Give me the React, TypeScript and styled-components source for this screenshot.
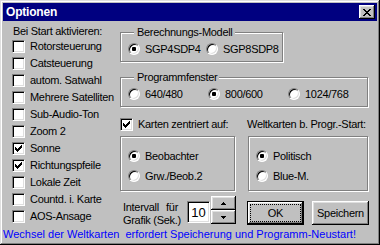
import styled, { createGlobalStyle } from "styled-components";

const GlobalStyle = createGlobalStyle`
  html, body {
    margin: 0;
    padding: 0;
    background: #c0c0c0;
  }
`;

const Window = styled.div`
  width: 380px;
  height: 245px;
  box-sizing: border-box;
  padding: 3px;
  background: #c0c0c0;
  box-shadow: inset -1px -1px #000, inset 1px 1px #dfdfdf, inset -2px -2px #808080,
    inset 2px 2px #fff;
  display: flex;
  flex-direction: column;
  color: #000;
  font-family: "Liberation Sans", Arial, sans-serif;
  font-size: 11px;
  line-height: 13px;
  letter-spacing: -0.3px;
`;

const TitleBar = styled.div`
  height: 18px;
  flex: none;
  background: #000080;
  color: #fff;
  display: flex;
  align-items: center;
  justify-content: space-between;
  padding: 0 2px 0 3px;
`;

const Title = styled.span`
  font-weight: bold;
  font-size: 12px;
  letter-spacing: -0.2px;
`;

const Raised = `
  background: #c0c0c0;
  border: none;
  padding: 0;
  margin: 0;
  box-sizing: border-box;
  box-shadow: inset -1px -1px #000, inset 1px 1px #fff, inset -2px -2px #808080,
    inset 2px 2px #dfdfdf;
  display: flex;
  align-items: center;
  justify-content: center;
  font: inherit;
  letter-spacing: inherit;
  color: #000;
`;

const CloseButton = styled.button`
  ${Raised}
  width: 16px;
  height: 14px;
`;

const Main = styled.div`
  display: flex;
`;

const LeftCol = styled.div`
  width: 117px;
  box-sizing: border-box;
  padding: 4px 0 0 9px;
  display: flex;
  flex-direction: column;
`;

const Heading = styled.div`
  height: 13px;
  padding-left: 1px;
`;

const CheckRow = styled.label<{ $h?: number }>`
  display: flex;
  align-items: center;
  gap: 5px;
  height: ${(p) => p.$h ?? 17}px;
  white-space: nowrap;
`;

const CheckBox = styled.span`
  width: 13px;
  height: 13px;
  flex: none;
  box-sizing: border-box;
  border: 1px solid;
  border-color: #808080 #fff #fff #808080;
  background: #fff;
  box-shadow: inset 1px 1px #000, inset -1px -1px #dfdfdf;
  display: flex;
  align-items: center;
  justify-content: center;
`;

const RightCol = styled.div`
  width: 249px;
  padding-top: 5px;
  display: flex;
  flex-direction: column;
`;

const GroupBox = styled.fieldset<{ $w: number; $mt?: number }>`
  width: ${(p) => p.$w}px;
  box-sizing: border-box;
  margin: ${(p) => p.$mt ?? 0}px 0 0 0;
  padding: 4px 0 6px 7px;
  border: 1px solid #808080;
  box-shadow: inset 1px 1px #fff, 1px 1px #fff;
  min-width: 0;
  display: flex;
`;

const Legend = styled.legend`
  margin-left: 6px;
  padding: 0 2px 0 3px;
  line-height: 13px;
  background: #c0c0c0;
`;

const RadioOption = styled.label<{ $w?: number }>`
  display: flex;
  align-items: center;
  gap: 5px;
  height: 12px;
  width: ${(p) => (p.$w ? `${p.$w}px` : "auto")};
  white-space: nowrap;
`;

const Radio = styled.span<{ $on?: boolean }>`
  width: 12px;
  height: 12px;
  flex: none;
  box-sizing: border-box;
  border-radius: 50%;
  border: 1px solid;
  border-color: #808080 #fff #fff #808080;
  background: #fff;
  box-shadow: inset 1px 1px #000, inset -1px -1px #dfdfdf;
  display: flex;
  align-items: center;
  justify-content: center;
  &::after {
    content: "";
    width: 4px;
    height: 4px;
    border-radius: 1px;
    background: ${(p) => (p.$on ? "#000" : "transparent")};
  }
`;

const MapGrid = styled.div`
  margin-top: 11px;
  display: grid;
  grid-template-columns: 115px 120px;
  grid-template-rows: 13px 55px;
  column-gap: 13px;
  row-gap: 5px;
`;

const NoteText = styled.div`
  white-space: nowrap;
  margin-left: -1px;
`;

const Panel = styled.div`
  box-sizing: border-box;
  border: 1px solid #808080;
  box-shadow: inset 1px 1px #fff, 1px 1px #fff;
  padding: 13px 0 0 7px;
  display: flex;
  flex-direction: column;
  gap: 8px;
`;

const ActionRow = styled.div`
  margin-top: 5px;
  display: flex;
  align-items: flex-start;
  padding-left: 3px;
`;

const IntervalLabel = styled.div`
  width: 59px;
  margin-top: 5px;
  display: flex;
  flex-direction: column;
`;

const SpreadLine = styled.div`
  display: flex;
  justify-content: space-between;
  width: 55px;
`;

const Edit = styled.div`
  width: 23px;
  height: 22px;
  margin: 5px 1px 0 5px;
  box-sizing: border-box;
  border: 1px solid;
  border-color: #808080 #fff #fff #808080;
  background: #fff;
  box-shadow: inset 1px 1px #000, inset -1px -1px #dfdfdf;
  font-size: 13px;
  letter-spacing: 0;
  display: flex;
  align-items: center;
  justify-content: center;
`;

const Spinner = styled.div`
  display: flex;
  flex-direction: column;
  width: 25px;
`;

const SpinButton = styled.button`
  ${Raised}
  width: 25px;
  height: 14px;
`;

const Button = styled.button<{ $default?: boolean }>`
  ${Raised}
  height: 24px;
  width: 57px;
  margin-top: 5px;
  margin-left: ${(p) => (p.$default ? 11 : 8)}px;
  border: ${(p) => (p.$default ? "1px solid #000" : "none")};
`;

const Focus = styled.span`
  flex: 1;
  align-self: stretch;
  margin: 2px;
  border: 1px dotted #000;
  display: flex;
  align-items: center;
  justify-content: center;
`;

const Footer = styled.div`
  margin-top: 1px;
  color: #0000ff;
  white-space: pre;
  line-height: 13px;
  letter-spacing: 0;
`;

const Check = () => (
  <svg width="7" height="7" viewBox="0 0 7 7" shapeRendering="crispEdges">
    <path d="M0 2h1v1h1v1h1v-1h1v-1h1v-1h1v-1h1v3h-1v1h-1v1h-1v1h-1v1h-1v-1h-1v-1h-1z" fill="#000" />
  </svg>
);

const CloseGlyph = () => (
  <svg width="8" height="7" viewBox="0 0 8 7" shapeRendering="crispEdges">
    <path
      d="M0 0h2v1h1v1h2v-1h1v-1h2v1h-1v1h-1v1h-1v1h1v1h1v1h1v1h-2v-1h-1v-1h-2v1h-1v1h-2v-1h1v-1h1v-1h1v-1h-1v-1h-1v-1h-1z"
      fill="#000"
    />
  </svg>
);

const Arrow = ({ up }: { up?: boolean }) => (
  <svg width="5" height="3" viewBox="0 0 5 3" shapeRendering="crispEdges">
    <path d={up ? "M2 0h1v1h1v1h1v1h-5v-1h1v-1h1z" : "M0 0h5v1h-1v1h-1v1h-1v-1h-1v-1h-1z"} fill="#000" />
  </svg>
);

const startOptions = [
  { label: "Rotorsteuerung", on: false },
  { label: "Catsteuerung", on: false },
  { label: "autom. Satwahl", on: false },
  { label: "Mehrere Satelliten", on: false },
  { label: "Sub-Audio-Ton", on: false },
  { label: "Zoom 2", on: false },
  { label: "Sonne", on: true },
  { label: "Richtungspfeile", on: true },
  { label: "Lokale Zeit", on: false },
  { label: "Countd. i. Karte", on: false },
  { label: "AOS-Ansage", on: false },
];

export default function App() {
  return (
    <>
      <GlobalStyle />
      <Window>
        <TitleBar>
          <Title>Optionen</Title>
          <CloseButton>
            <CloseGlyph />
          </CloseButton>
        </TitleBar>

        <Main>
          <LeftCol>
            <Heading>Bei Start aktivieren:</Heading>
            {startOptions.map((item) => (
              <CheckRow key={item.label}>
                <CheckBox>{item.on && <Check />}</CheckBox>
                {item.label}
              </CheckRow>
            ))}
          </LeftCol>

          <RightCol>
            <GroupBox $w={163}>
              <Legend>Berechnungs-Modell</Legend>
              <RadioOption $w={78}>
                <Radio $on />
                SGP4SDP4
              </RadioOption>
              <RadioOption>
                <Radio />
                SGP8SDP8
              </RadioOption>
            </GroupBox>

            <GroupBox $w={248} $mt={9}>
              <Legend>Programmfenster</Legend>
              <RadioOption $w={80}>
                <Radio />
                640/480
              </RadioOption>
              <RadioOption $w={80}>
                <Radio $on />
                800/600
              </RadioOption>
              <RadioOption>
                <Radio />
                1024/768
              </RadioOption>
            </GroupBox>

            <MapGrid>
              <CheckRow $h={13}>
                <CheckBox>
                  <Check />
                </CheckBox>
                Karten zentriert auf:
              </CheckRow>
              <NoteText>Weltkarten b. Progr.-Start:</NoteText>
              <Panel>
                <RadioOption>
                  <Radio $on />
                  Beobachter
                </RadioOption>
                <RadioOption>
                  <Radio />
                  Grw./Beob.2
                </RadioOption>
              </Panel>
              <Panel>
                <RadioOption>
                  <Radio $on />
                  Politisch
                </RadioOption>
                <RadioOption>
                  <Radio />
                  Blue-M.
                </RadioOption>
              </Panel>
            </MapGrid>

            <ActionRow>
              <IntervalLabel>
                <SpreadLine>
                  <span>Intervall</span>
                  <span>für</span>
                </SpreadLine>
                <span>Grafik (Sek.)</span>
              </IntervalLabel>
              <Edit>10</Edit>
              <Spinner>
                <SpinButton>
                  <Arrow up />
                </SpinButton>
                <SpinButton>
                  <Arrow />
                </SpinButton>
              </Spinner>
              <Button $default>
                <Focus>OK</Focus>
              </Button>
              <Button>Speichern</Button>
            </ActionRow>
          </RightCol>
        </Main>

        <Footer>{"Wechsel der Weltkarten  erfordert Speicherung und Programm-Neustart!"}</Footer>
      </Window>
    </>
  );
}
